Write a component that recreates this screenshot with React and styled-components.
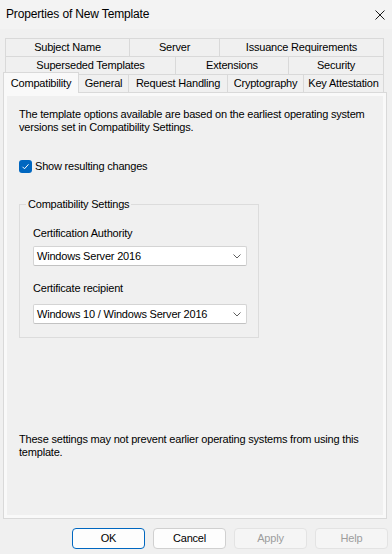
import React from 'react';
import styled, { createGlobalStyle } from 'styled-components';

const Global = createGlobalStyle`
  html, body { margin: 0; padding: 0; background: #f0f0f0; }
  body {
    font-family: "Liberation Sans", Arial, sans-serif;
    font-size: 11px;
    letter-spacing: -0.2px;
    color: #000;
  }
  * { box-sizing: border-box; }
`;

const Dialog = styled.div`
  width: 392px;
  height: 554px;
  display: flex;
  flex-direction: column;
  background: #f0f0f0;
  overflow: hidden;
`;

const TitleBar = styled.div`
  height: 29px;
  flex: none;
  display: flex;
  align-items: center;
  justify-content: space-between;
  padding: 0 7px 0 6px;
  background: #f3f3f3;
  font-size: 12px;
  line-height: 15px;
  letter-spacing: -0.15px;
`;

const CloseIcon = styled.svg`
  width: 10px;
  height: 10px;
  display: block;
`;

const TabStrip = styled.div`
  margin: 9px 0 0 5px;
  width: 379px;
  display: flex;
  flex-direction: column;
`;

const TabRow = styled.div`
  display: flex;
  height: 18px;
`;

const Tab = styled.div`
  flex: none;
  width: ${(p) => p.$w}px;
  height: 18px;
  border: 1px solid #d9d9d9;
  border-bottom: none;
  border-right: none;
  background: #f0f0f0;
  text-align: center;
  line-height: 17px;
  white-space: nowrap;
  &:last-child { border-right: 1px solid #d9d9d9; }
`;

const ActiveTab = styled.div`
  flex: none;
  position: relative;
  z-index: 1;
  width: ${(p) => p.$w + 3}px;
  height: 21px;
  margin: -2px -1px -1px -2px;
  border: 1px solid #d9d9d9;
  border-bottom: none;
  background: #f9f9f9;
  text-align: center;
  line-height: 17px;
  padding-top: 2px;
  white-space: nowrap;
`;

const Panel = styled.div`
  margin: 0 5px 0 3px;
  height: 427px;
  flex: none;
  border: 1px solid #d9d9d9;
  background: #f9f9f9;
  padding: 3px;
  display: flex;
`;

const Page = styled.div`
  flex: 1;
  background: #f0f0f0;
  padding: 12px 4px 56px 12px;
  display: flex;
  flex-direction: column;
  align-items: flex-start;
`;

const Text = styled.p`
  margin: ${(p) => p.$mt || 0}px 0 0;
  line-height: 13px;
  white-space: nowrap;
`;

const CheckRow = styled.label`
  margin-top: 26px;
  height: 13px;
  display: flex;
  align-items: center;
  gap: 3px;
  line-height: 13px;
`;

const CheckBox = styled.span`
  width: 13px;
  height: 13px;
  border-radius: 3px;
  background: #0067c0;
  display: flex;
  align-items: center;
  justify-content: center;
`;

const Group = styled.fieldset`
  margin: 25px 0 0;
  width: 240px;
  min-width: 0;
  border: 1px solid #dcdcdc;
  padding: 0 0 13px 13px;
  display: flex;
  flex-direction: column;
`;

const Legend = styled.legend`
  padding: 0 2px;
  margin-left: -7px;
  line-height: 13px;
`;

const FieldLabel = styled.div`
  margin-top: 16px;
  line-height: 13px;
`;

const Combo = styled.div`
  margin-top: ${(p) => p.$mt}px;
  width: 214px;
  height: 20px;
  background: #fff;
  border: 1px solid #d4d4d4;
  border-bottom-color: #c2c2c2;
  border-radius: 2px;
  display: flex;
  align-items: center;
  justify-content: space-between;
  padding: 0 5px 0 3px;
  line-height: 13px;
`;

const Chevron = styled.svg`
  width: 8px;
  height: 5px;
  display: block;
`;

const Note = styled.p`
  margin: auto 0 0;
  line-height: 13px;
  white-space: nowrap;
`;

const ButtonRow = styled.div`
  margin-top: 9px;
  padding-left: 72px;
  display: flex;
  gap: 8px;
`;

const Button = styled.button`
  width: 73px;
  height: 21px;
  font: inherit;
  letter-spacing: inherit;
  line-height: 13px;
  padding: 0;
  border-radius: 4px;
  border: 1px solid ${(p) => (p.$primary ? '#0067c0' : p.disabled ? '#e3e3e3' : '#d0d0d0')};
  background: ${(p) => (p.disabled ? '#f5f5f5' : '#fdfdfd')};
  color: ${(p) => (p.disabled ? '#9d9d9d' : '#000')};
`;

const rows = [
  [
    { label: 'Subject Name', w: 124 },
    { label: 'Server', w: 90 },
    { label: 'Issuance Requirements', w: 165 },
  ],
  [
    { label: 'Superseded Templates', w: 170 },
    { label: 'Extensions', w: 113 },
    { label: 'Security', w: 96 },
  ],
  [
    { label: 'Compatibility', w: 73, active: true },
    { label: 'General', w: 50 },
    { label: 'Request Handling', w: 99 },
    { label: 'Cryptography', w: 76 },
    { label: 'Key Attestation', w: 81 },
  ],
];

const ChevronDown = () => (
  <Chevron viewBox="0 0 8 5">
    <polyline points="0.5,0.5 4,4 7.5,0.5" fill="none" stroke="#5f5f5f" strokeWidth="1" />
  </Chevron>
);

export default function App() {
  return (
    <>
      <Global />
      <Dialog>
        <TitleBar>
          <span>Properties of New Template</span>
          <CloseIcon viewBox="0 0 10 10">
            <path d="M0.5 0.5 L9.5 9.5 M9.5 0.5 L0.5 9.5" stroke="#1a1a1a" strokeWidth="1" />
          </CloseIcon>
        </TitleBar>

        <TabStrip>
          {rows.map((row, i) => (
            <TabRow key={i}>
              {row.map((t) =>
                t.active ? (
                  <ActiveTab key={t.label} $w={t.w}>{t.label}</ActiveTab>
                ) : (
                  <Tab key={t.label} $w={t.w}>{t.label}</Tab>
                )
              )}
            </TabRow>
          ))}
        </TabStrip>

        <Panel>
          <Page>
            <Text>
              The template options available are based on the earliest operating system
              <br />
              versions set in Compatibility Settings.
            </Text>

            <CheckRow>
              <CheckBox>
                <svg width="9" height="9" viewBox="0 0 9 9">
                  <polyline points="1.5,4.8 3.5,6.8 7.5,2.3" fill="none" stroke="#fff" strokeWidth="1" />
                </svg>
              </CheckBox>
              <span>Show resulting changes</span>
            </CheckRow>

            <Group>
              <Legend>Compatibility Settings</Legend>
              <FieldLabel>Certification Authority</FieldLabel>
              <Combo $mt={6}>
                <span>Windows Server 2016</span>
                <ChevronDown />
              </Combo>
              <FieldLabel>Certificate recipient</FieldLabel>
              <Combo $mt={9}>
                <span>Windows 10 / Windows Server 2016</span>
                <ChevronDown />
              </Combo>
            </Group>

            <Note>
              These settings may not prevent earlier operating systems from using this
              <br />
              template.
            </Note>
          </Page>
        </Panel>

        <ButtonRow>
          <Button $primary>OK</Button>
          <Button>Cancel</Button>
          <Button disabled>Apply</Button>
          <Button disabled>Help</Button>
        </ButtonRow>
      </Dialog>
    </>
  );
}
